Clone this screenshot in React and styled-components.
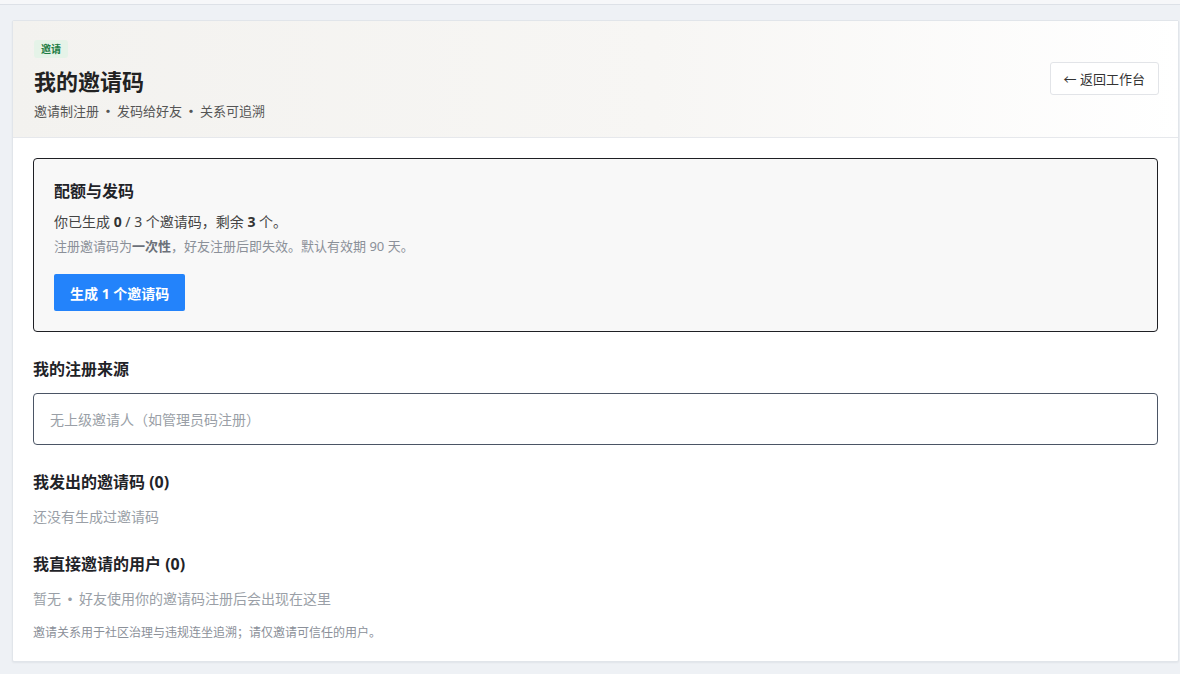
import React from "react";
import styled, { createGlobalStyle } from "styled-components";

const Global = createGlobalStyle`
  html, body { margin: 0; padding: 0; }
  body {
    background: #eef1f5;
    font-family: "Noto Sans", "Noto Sans CJK SC", sans-serif;
    color: #1f2328;
  }
  * { box-sizing: border-box; }
`;

const Page = styled.div`
  min-height: 674px;
  background: #eef1f5;
`;

const TopStrip = styled.div`
  height: 5px;
  background: #f6f7f9;
  border-bottom: 1px solid #dde1e7;
`;

const Card = styled.div`
  margin: 15px 1px 12px 12px;
  background: #fff;
  border: 1px solid #e1e5ea;
  border-radius: 2px;
  box-shadow: 0 1px 2px rgba(20, 30, 50, 0.06);
`;

const Header = styled.div`
  display: flex;
  align-items: center;
  justify-content: space-between;
  padding: 19px 19px 16px 21px;
  background: linear-gradient(90deg, #f3f2ef 0%, #f7f6f4 55%, #ffffff 100%);
  border-bottom: 1px solid #e6e8ec;
`;

const HeaderText = styled.div`
  display: flex;
  flex-direction: column;
  align-items: flex-start;
`;

const Badge = styled.span`
  display: inline-block;
  font-size: 10px;
  font-weight: 700;
  line-height: 18px;
  height: 18px;
  padding: 0 7px;
  border-radius: 3px;
  color: #1c7c43;
  background: #e5f3e8;
`;

const Title = styled.h1`
  margin: 8px 0 0;
  font-size: 22px;
  line-height: 30px;
  font-weight: 700;
  color: #222;
`;

const Subtitle = styled.div`
  margin-top: 5px;
  font-size: 13px;
  line-height: 20px;
  color: #555;
`;

const Sep = styled.span`
  display: inline-block;
  width: ${(p) => p.$w || 18}px;
  text-align: center;
  font-family: "Noto Sans CJK SC", sans-serif;
  font-weight: 700;
`;

const BackButton = styled.button`
  height: 33px;
  margin-top: -4px;
  padding: 0 13px;
  background: #fff;
  border: 1px solid #e2e4e8;
  border-radius: 3px;
  font-family: inherit;
  font-size: 13px;
  color: #333;
  cursor: pointer;
`;

const Body = styled.div`
  padding: 20px 20px 20px 20px;
  display: flex;
  flex-direction: column;
`;

const QuotaBox = styled.div`
  border: 1px solid #1e1f24;
  border-radius: 4px;
  background: #f8f8f8;
  padding: 21px 20px 20px;
  display: flex;
  flex-direction: column;
  align-items: flex-start;
`;

const SectionTitle = styled.h2`
  margin: ${(p) => p.$mt || 0}px 0 0;
  font-size: 16px;
  line-height: 22px;
  font-weight: 700;
  color: #1f2328;
`;

const Line = styled.div`
  margin-top: ${(p) => p.$mt || 0}px;
  font-size: ${(p) => p.$size || 14}px;
  line-height: ${(p) => p.$lh || 20}px;
  color: ${(p) => p.$color || "#444"};
  b { font-weight: 700; color: ${(p) => p.$strong || "#333"}; }
`;

const PrimaryButton = styled.button`
  margin-top: 18px;
  height: 37px;
  padding: 0 16px;
  border: none;
  border-radius: 2px;
  background: #2383fb;
  color: #fff;
  font-family: inherit;
  font-size: 14px;
  font-weight: 700;
  cursor: pointer;
`;

const SourceBox = styled.div`
  margin-top: 13px;
  height: 52px;
  border: 1px solid #4b5565;
  border-radius: 4px;
  padding: 0 16px;
  display: flex;
  align-items: center;
  font-size: 14px;
  color: #9a9fa7;
`;

export default function App() {
  return (
    <>
      <Global />
      <Page>
        <TopStrip />
        <Card>
          <Header>
            <HeaderText>
              <Badge>邀请</Badge>
              <Title>我的邀请码</Title>
              <Subtitle>
                邀请制注册<Sep>·</Sep>发码给好友<Sep>·</Sep>关系可追溯
              </Subtitle>
            </HeaderText>
            <BackButton>← 返回工作台</BackButton>
          </Header>
          <Body>
            <QuotaBox>
              <SectionTitle>配额与发码</SectionTitle>
              <Line $mt={10}>
                你已生成 <b>0</b> / 3 个邀请码，剩余 <b>3</b> 个。
              </Line>
              <Line $mt={5} $size={13} $lh={19} $color="#8b9099" $strong="#6b7079">
                注册邀请码为<b>一次性</b>，好友注册后即失效。默认有效期 90 天。
              </Line>
              <PrimaryButton>生成 1 个邀请码</PrimaryButton>
            </QuotaBox>

            <SectionTitle $mt={26}>我的注册来源</SectionTitle>
            <SourceBox>无上级邀请人（如管理员码注册）</SourceBox>

            <SectionTitle $mt={26}>我发出的邀请码 (0)</SectionTitle>
            <Line $mt={14} $color="#9a9fa7">还没有生成过邀请码</Line>

            <SectionTitle $mt={26}>我直接邀请的用户 (0)</SectionTitle>
            <Line $mt={13} $color="#9a9fa7">
              暂无<Sep>·</Sep>好友使用你的邀请码注册后会出现在这里
            </Line>
            <Line $mt={16} $size={12} $lh={16} $color="#8b9099">
              邀请关系用于社区治理与违规连坐追溯；请仅邀请可信任的用户。
            </Line>
          </Body>
        </Card>
      </Page>
    </>
  );
}
